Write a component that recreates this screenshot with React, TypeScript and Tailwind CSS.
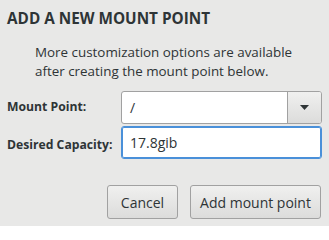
import React from "react";

export default function App() {
  return (
    <div
      className="w-[329px] h-[226px] bg-[#e8e8e7] text-[#2e3436] overflow-hidden"
      style={{ fontFamily: '"Open Sans", "Noto Sans", sans-serif' }}
    >
      <div className="pt-[8px] pl-[7px] text-[15.3px] leading-[20px] font-bold">
        ADD A NEW MOUNT POINT
      </div>
      <div className="mt-[15px] ml-[35px] text-[13.4px] leading-[19px]">
        <div>More customization options are available</div>
        <div>after creating the mount point below.</div>
      </div>
      <div className="mt-[10px] grid grid-cols-[114px_201px] gap-y-[2px] pl-[7px] items-center">
        <div className="text-[12.2px] font-bold">Mount Point:</div>
        <div className="flex h-[33px] rounded-[3px] border border-[#a1a1a1] bg-white overflow-hidden">
          <div className="flex-1 flex items-center pl-[8px] text-[14px]">/</div>
          <div className="w-[34px] flex items-center justify-center border-l border-[#a1a1a1] bg-gradient-to-b from-[#f0f0ef] to-[#dcdcdb]">
            <svg width="9" height="5" viewBox="0 0 9 5">
              <path d="M0 0 L9 0 L4.5 5 Z" fill="#2e3436" />
            </svg>
          </div>
        </div>
        <div className="text-[12.2px] font-bold pt-[6px]">Desired Capacity:</div>
        <div className="flex items-center h-[33px] rounded-[3px] border border-[#4a90d9] bg-white pl-[8px] text-[14px] shadow-[inset_0_0_0_1px_#4a90d9]">
          17.8gib
        </div>
      </div>
      <div className="mt-[26px] flex justify-end gap-[12px] pr-[8px]">
        <button className="w-[71px] h-[34px] rounded-[3px] border border-[#a1a1a1] bg-gradient-to-b from-[#f0f0ef] to-[#dcdcdb] text-[14px]">
          Cancel
        </button>
        <button className="w-[131px] h-[34px] rounded-[3px] border border-[#a1a1a1] bg-gradient-to-b from-[#f0f0ef] to-[#dcdcdb] text-[14px]">
          Add mount point
        </button>
      </div>
    </div>
  );
}
